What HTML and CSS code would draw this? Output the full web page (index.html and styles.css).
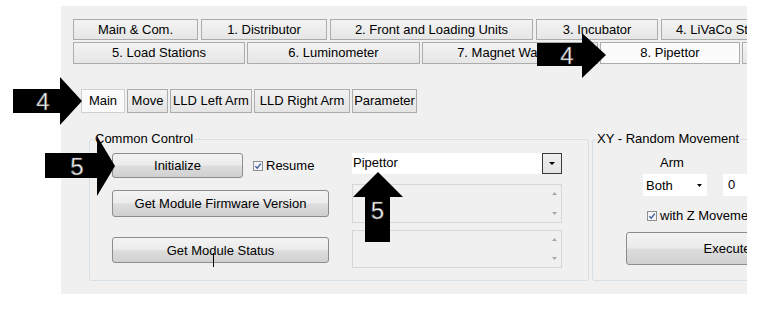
FILE: index.html
```html
<!DOCTYPE html>
<html>
  <head>
    <meta charset="UTF-8">
    <title>Pipettor - Main</title>
    <link rel="stylesheet" href="styles.css">
  </head>
  <body>
    <div class="window">
      <div class="tabrow">
        <div class="tab tab-main">Main &amp; Com.</div>
        <div class="tab tab-dist">1. Distributor</div>
        <div class="tab tab-front">2. Front and Loading Units</div>
        <div class="tab tab-incu">3. Incubator</div>
        <div class="tab tab-livaco">4. LiVaCo Station</div>
      </div>
      <div class="tabrow tabrow-bottom">
        <div class="tab tab-load">5. Load Stations</div>
        <div class="tab tab-lumi">6. Luminometer</div>
        <div class="tab tab-magnet">7. Magnet Washer</div>
        <div class="tab tab-pip tab-selected">8. Pipettor</div>
        <div class="tab tab-next">9. Reagents</div>
      </div>

      <div class="subtabs">
        <div class="subtab sub-main subtab-selected">Main</div>
        <div class="subtab sub-move">Move</div>
        <div class="subtab sub-left">LLD Left Arm</div>
        <div class="subtab sub-right">LLD Right Arm</div>
        <div class="subtab sub-param">Parameter</div>
      </div>

      <div class="groups">
        <fieldset class="group group-common">
          <legend>Common Control</legend>
          <div class="common-grid">
            <div class="init-cell">
              <button class="btn btn-init">Initialize</button>
              <label class="check">
                <svg width="10" height="10" viewBox="0 0 10 10"><rect x="0.5" y="0.5" width="9" height="9" fill="#f4f4f4" stroke="#8e8f8f"/><path d="M2.3 5.2 L4.2 7.2 L7.8 2.6" fill="none" stroke="#3b5fa0" stroke-width="1.4"/></svg>
                Resume
              </label>
            </div>
            <div class="combo">
              <span class="combo-text">Pipettor</span>
              <span class="combo-btn"><svg width="6" height="3" viewBox="0 0 6 3"><path d="M0 0 H6 L3 3 Z" fill="#000"/></svg></span>
            </div>
            <button class="btn btn-wide btn-fw">Get Module Firmware Version</button>
            <div class="memo">
              <div class="memo-scroll">
                <svg width="5" height="3" viewBox="0 0 5 3"><path d="M0 3 H5 L2.5 0 Z" fill="#a8a8a8"/></svg>
                <svg width="5" height="3" viewBox="0 0 5 3"><path d="M0 0 H5 L2.5 3 Z" fill="#a8a8a8"/></svg>
              </div>
            </div>
            <button class="btn btn-wide btn-status">Get Module Status</button>
            <div class="memo memo-low">
              <div class="memo-scroll">
                <svg width="5" height="3" viewBox="0 0 5 3"><path d="M0 3 H5 L2.5 0 Z" fill="#a8a8a8"/></svg>
                <svg width="5" height="3" viewBox="0 0 5 3"><path d="M0 0 H5 L2.5 3 Z" fill="#a8a8a8"/></svg>
              </div>
            </div>
          </div>
        </fieldset>

        <fieldset class="group group-xy">
          <legend>XY - Random Movement</legend>
          <div class="arm-label">Arm</div>
          <div class="xy-row">
            <div class="select">
              <span>Both</span>
              <svg width="5" height="3" viewBox="0 0 5 3"><path d="M0 0 H5 L2.5 3 Z" fill="#000"/></svg>
            </div>
            <div class="num">0</div>
          </div>
          <label class="check xy-check">
            <svg width="10" height="10" viewBox="0 0 10 10"><rect x="0.5" y="0.5" width="9" height="9" fill="#f4f4f4" stroke="#8e8f8f"/><path d="M2.3 5.2 L4.2 7.2 L7.8 2.6" fill="none" stroke="#3b5fa0" stroke-width="1.4"/></svg>
            with Z Movement
          </label>
          <button class="btn btn-execute">Execute</button>
        </fieldset>
      </div>
    </div>

    <!-- callout arrows over the screenshot -->
    <svg class="callout callout-tab" width="70" height="50" viewBox="0 0 70 50">
      <path d="M0 13 H45 V3 L69 25 L45 48 V36 H0 Z" fill="#000"/>
      <text x="30" y="34" class="callout-num">4</text>
    </svg>
    <svg class="callout callout-sub" width="70" height="50" viewBox="0 0 70 50">
      <path d="M0 13 H47 V1 L69 25 L47 49 V37 H0 Z" fill="#000"/>
      <text x="30" y="34" class="callout-num">4</text>
    </svg>
    <svg class="callout callout-init" width="71" height="62" viewBox="0 0 71 62">
      <path d="M0 18 H52 V1 L70 31 L52 61 V43 H0 Z" fill="#000"/>
      <text x="32" y="40" class="callout-num">5</text>
    </svg>
    <svg class="callout callout-combo" width="52" height="72" viewBox="0 0 52 72">
      <path d="M26 1 L51 26 H38 V71 H13 V26 H1 Z" fill="#000"/>
      <text x="25.5" y="48" class="callout-num">5</text>
    </svg>
    <div class="ibeam"></div>
  </body>
</html>
```

FILE: styles.css
```css
body {
  margin: 0;
  background-color: #fff;
  color: #000;
  font-family: "Liberation Sans", Arial, sans-serif;
  font-size: 13px;
}

.window {
  margin: 6px 0 0 61px;
  width: 686px;
  height: 288px;
  box-sizing: border-box;
  padding: 13px 0 0 12px;
  background-color: #f0f0f0;
  overflow: hidden;
}

/* module tabs */
.tabrow {
  display: flex;
  gap: 3px;
}

.tabrow-bottom {
  gap: 2px;
  margin-top: 2px;
}

.tab {
  flex: none;
  height: 21px;
  box-sizing: border-box;
  border: 1px solid #acacac;
  background: linear-gradient(#f3f3f3, #e6e6e6);
  line-height: 19px;
  text-align: center;
  white-space: nowrap;
  overflow: hidden;
}

.tabrow-bottom .tab {
  height: 22px;
  line-height: 20px;
}

.tab-selected {
  background: #fbfbfb;
}

.tab-main { width: 125px; }
.tab-dist { width: 126px; }
.tab-front { width: 203px; }
.tab-incu { width: 122px; }
.tab-livaco { width: 130px; }
.tab-load { width: 172px; }
.tab-lumi { width: 173px; }
.tab-magnet { width: 176px; }
.tab-pip { width: 140px; }
.tab-next { width: 120px; }

/* page tabs */
.subtabs {
  display: flex;
  gap: 2px;
  margin: 25px 0 0 8px;
}

.subtab {
  height: 24px;
  box-sizing: border-box;
  border: 1px solid #acacac;
  background: linear-gradient(#f2f2f2, #e4e4e4);
  line-height: 22px;
  text-align: center;
}

.subtab-selected {
  background: #fafafa;
  border-color: #cfcfcf;
}

.sub-main { width: 44px; }
.sub-move { width: 41px; }
.sub-left { width: 82px; }
.sub-right { width: 96px; }
.sub-param { width: 65px; }

/* group boxes */
.groups {
  display: flex;
  gap: 3px;
  margin: 18px 0 0 16px;
}

.group {
  flex: none;
  margin: 0;
  min-width: 0;
  box-sizing: border-box;
  border: 1px solid #d5dfe5;
  border-radius: 3px;
  padding: 6px 0 12px 22px;
}

.group legend {
  padding: 0 1px;
  margin-left: -18px;
  line-height: 16px;
}

.group-common {
  width: 500px;
}

.group-xy {
  width: 260px;
  padding-left: 50px;
}

.group-xy legend {
  margin-left: -47px;
}

.common-grid {
  display: grid;
  grid-template-columns: 217px 210px;
  grid-template-rows: 25px 39px 39px;
  column-gap: 23px;
  row-gap: 6px;
}

.init-cell {
  display: flex;
  align-items: center;
}

.btn {
  box-sizing: border-box;
  padding: 0;
  border: 1px solid #8c8c8c;
  border-radius: 3px;
  background: linear-gradient(#f3f3f3 0%, #ebebeb 48%, #dddddd 52%, #d0d0d0 100%);
  color: #000;
  font-family: inherit;
  font-size: 13px;
  text-align: center;
  white-space: nowrap;
}

.btn-init {
  width: 131px;
  height: 25px;
}

.btn-wide {
  width: 217px;
  align-self: center;
}

.btn-fw { height: 27px; }
.btn-status { height: 26px; margin-top: 3px; }

.check {
  display: flex;
  align-items: center;
  gap: 3px;
  margin-left: 10px;
  line-height: 16px;
  white-space: nowrap;
}

.combo {
  align-self: start;
  height: 21px;
  display: flex;
  justify-content: space-between;
  background-color: #fff;
}

.combo-text {
  padding-left: 1px;
  line-height: 20px;
}

.combo-btn {
  width: 20px;
  height: 21px;
  box-sizing: border-box;
  border: 1px solid #3a3a3a;
  background: linear-gradient(#f0f0f0, #e3e3e3);
  display: flex;
  align-items: center;
  justify-content: center;
}

.memo {
  box-sizing: border-box;
  border: 1px solid #d6d6d6;
  background-color: #f0f0f0;
  display: flex;
  justify-content: flex-end;
}

.memo-low {
  height: 38px;
  align-self: end;
}

.memo-scroll {
  width: 14px;
  padding: 7px 0;
  display: flex;
  flex-direction: column;
  justify-content: space-between;
  align-items: center;
}

/* xy group */
.arm-label {
  margin: 2px 0 0 17px;
  line-height: 16px;
}

.xy-row {
  display: flex;
  gap: 16px;
  margin-top: 3px;
}

.select {
  width: 64px;
  height: 22px;
  box-sizing: border-box;
  padding: 0 5px 0 3px;
  display: flex;
  align-items: center;
  justify-content: space-between;
  background-color: #fff;
}

.num {
  width: 80px;
  height: 22px;
  box-sizing: border-box;
  padding-left: 5px;
  line-height: 22px;
  background-color: #fff;
}

.xy-check {
  margin: 12px 0 0 4px;
}

.btn-execute {
  display: block;
  width: 202px;
  height: 33px;
  margin: 8px 0 0 -17px;
}

/* callouts */
.callout {
  position: absolute;
}

.callout-num {
  font-family: "Liberation Sans", Arial, sans-serif;
  font-size: 24px;
  fill: #fff;
  stroke: #555;
  stroke-width: 0.6;
  text-anchor: middle;
}

.callout-tab { left: 537px; top: 30px; }
.callout-sub { left: 13px; top: 76px; }
.callout-init { left: 45px; top: 135px; }
.callout-combo { left: 352px; top: 171px; }

.ibeam {
  position: absolute;
  left: 213px;
  top: 253px;
  width: 1px;
  height: 14px;
  background-color: #000;
}
```
